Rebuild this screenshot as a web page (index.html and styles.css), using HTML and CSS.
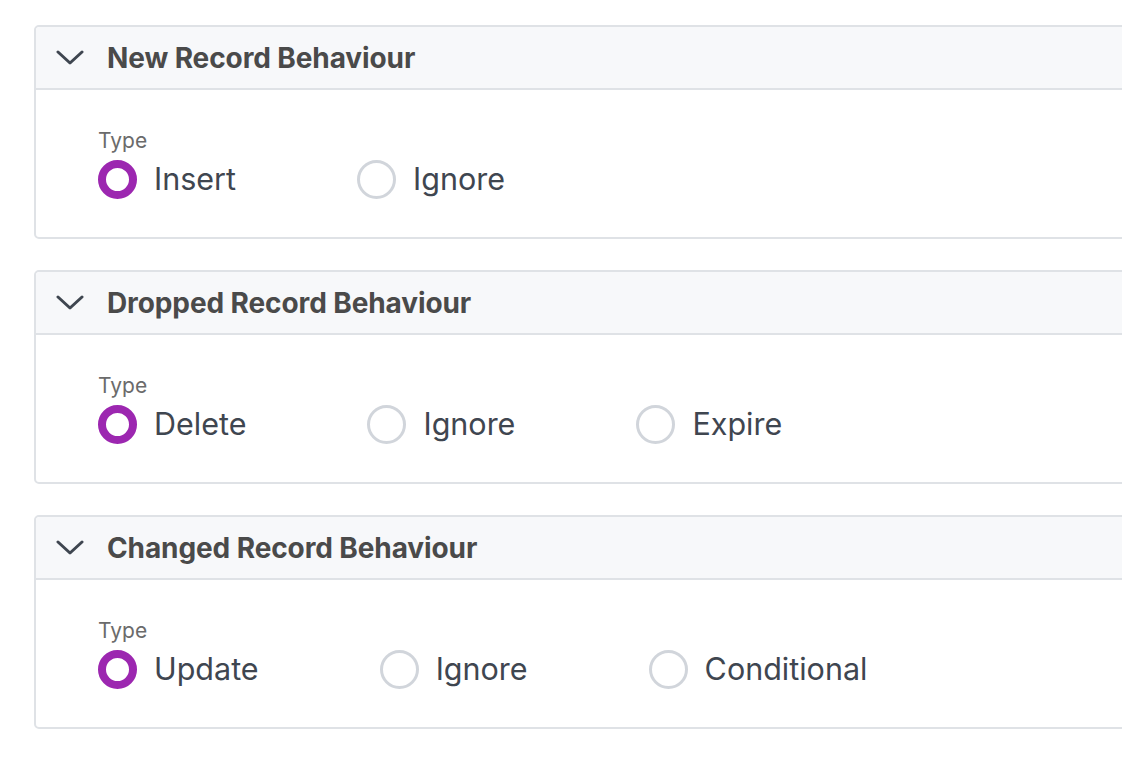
FILE: index.html
```html
<!DOCTYPE html>
<html>
<head>
<meta charset="utf-8">
<link rel="stylesheet" href="styles.css">
</head>
<body>
<div class="stack">
  <section class="panel">
    <div class="panel-head">
      <svg class="chev" width="28" height="16" viewBox="0 0 28 16"><path d="M2 2 L14 13 L26 2" fill="none" stroke="#3f4650" stroke-width="3" stroke-linecap="round" stroke-linejoin="round"/></svg>
      <span class="title">New Record Behaviour</span>
    </div>
    <div class="panel-body">
      <div class="label">Type</div>
      <div class="options">
        <label class="opt"><span class="radio on"></span><span class="txt">Insert</span></label>
        <label class="opt"><span class="radio"></span><span class="txt">Ignore</span></label>
      </div>
    </div>
  </section>
  <section class="panel">
    <div class="panel-head">
      <svg class="chev" width="28" height="16" viewBox="0 0 28 16"><path d="M2 2 L14 13 L26 2" fill="none" stroke="#3f4650" stroke-width="3" stroke-linecap="round" stroke-linejoin="round"/></svg>
      <span class="title">Dropped Record Behaviour</span>
    </div>
    <div class="panel-body">
      <div class="label">Type</div>
      <div class="options">
        <label class="opt"><span class="radio on"></span><span class="txt">Delete</span></label>
        <label class="opt"><span class="radio"></span><span class="txt">Ignore</span></label>
        <label class="opt"><span class="radio"></span><span class="txt">Expire</span></label>
      </div>
    </div>
  </section>
  <section class="panel">
    <div class="panel-head">
      <svg class="chev" width="28" height="16" viewBox="0 0 28 16"><path d="M2 2 L14 13 L26 2" fill="none" stroke="#3f4650" stroke-width="3" stroke-linecap="round" stroke-linejoin="round"/></svg>
      <span class="title">Changed Record Behaviour</span>
    </div>
    <div class="panel-body">
      <div class="label">Type</div>
      <div class="options">
        <label class="opt"><span class="radio on"></span><span class="txt">Update</span></label>
        <label class="opt"><span class="radio"></span><span class="txt">Ignore</span></label>
        <label class="opt"><span class="radio"></span><span class="txt">Conditional</span></label>
      </div>
    </div>
  </section>
</div>
</body>
</html>
```
FILE: styles.css
```css
html, body {
  margin: 0;
  padding: 0;
  overflow: hidden;
  background: #ffffff;
}
body {
  font-family: Inter, "Noto Sans", "Liberation Sans", sans-serif;
  width: 1122px;
  height: 764px;
}
.stack {
  display: flex;
  flex-direction: column;
  gap: 31px;
  padding: 25px 0 0 34px;
}
.panel {
  width: 1120px;
  border: 2px solid #dfe2e6;
  border-radius: 5px;
  background: #fff;
  box-sizing: border-box;
  height: 214px;
}
.panel-head {
  height: 61px;
  background: #f7f8fa;
  border-bottom: 2px solid #dfe2e6;
  border-radius: 4px 4px 0 0;
  display: flex;
  align-items: center;
  padding-left: 20px;
}
.chev {
  display: block;
  margin-top: 1px;
}
.title {
  margin-left: 23px;
  font-size: 28px;
  font-weight: 700;
  color: #4a4a4a;
  letter-spacing: -0.1px;
}
.panel-body {
  padding: 38px 0 0 62px;
}
.label {
  font-size: 21px;
  color: #6b6b6b;
  line-height: 26px;
}
.options {
  display: flex;
  align-items: center;
  gap: 121px;
  margin-top: 5px;
}
.opt {
  display: flex;
  align-items: center;
  gap: 17px;
}
.radio {
  width: 39px;
  height: 39px;
  border-radius: 50%;
  box-sizing: border-box;
  border: 3px solid #d1d5db;
  background: #fff;
}
.radio.on {
  border: 8px solid #9c27b0;
}
.txt {
  font-size: 30.5px;
  color: #3f4650;
  line-height: 40px;
}
```
